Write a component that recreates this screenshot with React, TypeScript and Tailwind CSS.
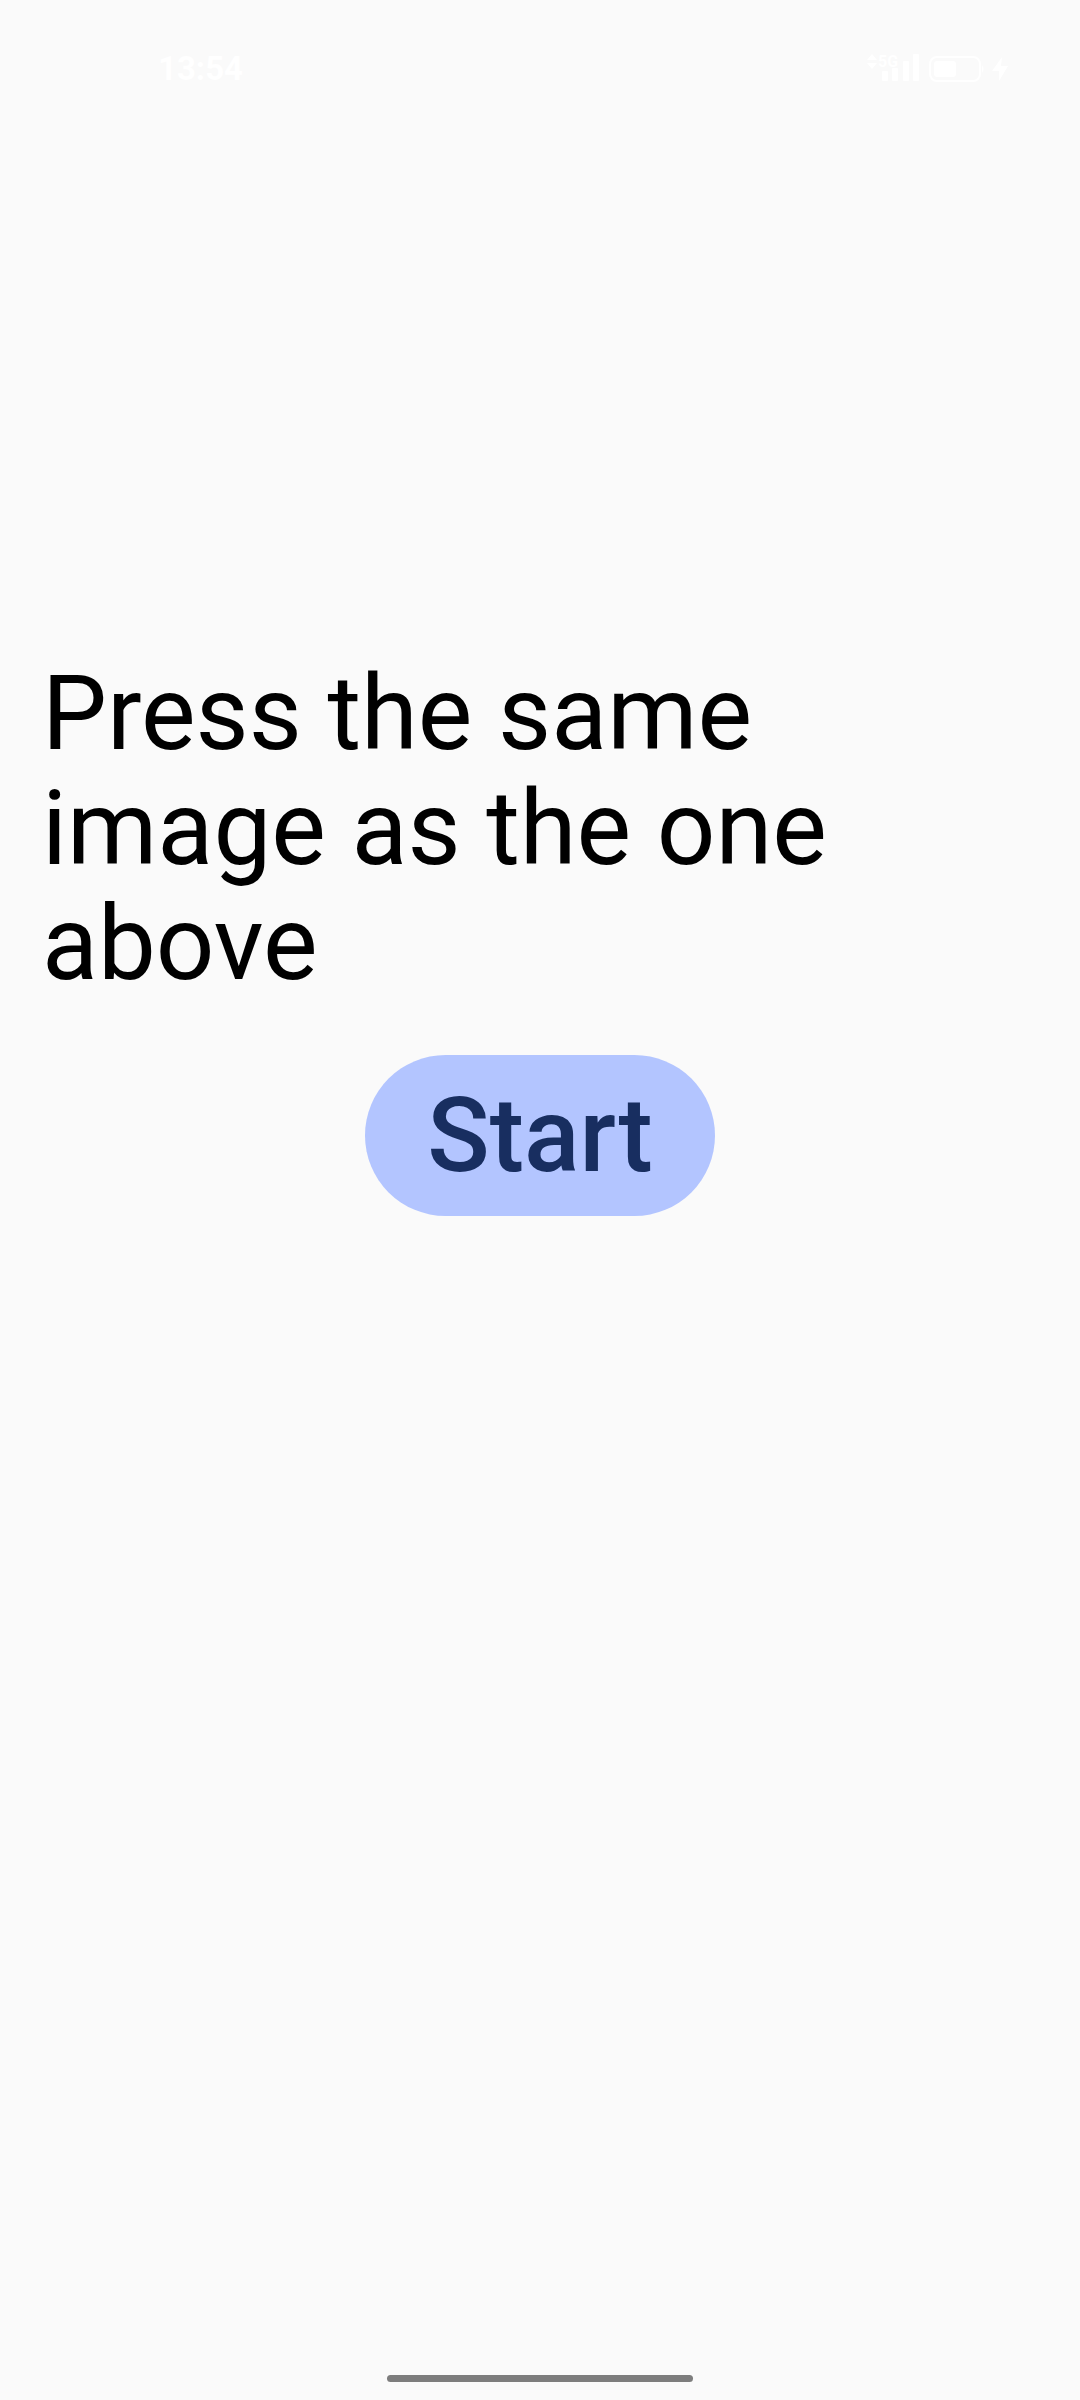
function SignalIcon() {
  return (
    <svg viewBox="0 -6 56 44" className="h-11 w-14" fill="currentColor" aria-hidden="true">
      <path d="M3 7l5-6 5 6zM3 10h10l-5 6z" />
      <text x="14" y="14" fontSize="16" fontWeight="700">
        5G
      </text>
      <rect x="18" y="18" width="6" height="10" rx="1" />
      <rect x="28" y="15" width="6" height="13" rx="1" />
      <rect x="39" y="8" width="6" height="20" rx="1" />
      <rect x="49" y="1" width="6" height="27" rx="1" />
    </svg>
  );
}

function BatteryIcon() {
  return (
    <svg viewBox="0 0 56 28" className="h-7 w-14" aria-hidden="true">
      <rect x="2" y="2" width="50" height="24" rx="7" fill="none" stroke="currentColor" strokeWidth="2" />
      <rect x="6" y="6" width="22" height="16" rx="3" fill="currentColor" />
      <path d="M54 10q3 4 0 8z" fill="currentColor" />
    </svg>
  );
}

function BoltIcon() {
  return (
    <svg viewBox="0 0 16 24" className="h-6 w-4" fill="currentColor" aria-hidden="true">
      <path d="M10 0L0 14h7v10l9-15H9z" />
    </svg>
  );
}

export default function App() {
  return (
    <div className="flex min-h-screen flex-col bg-[#fafafa] font-['Roboto',sans-serif]">
      <header className="flex h-[138px] items-center justify-between pr-[72px] pl-[158px] text-white">
        <time className="text-[33px] leading-[42px] font-bold">13:54</time>
        <div className="flex items-center gap-2">
          <SignalIcon />
          <BatteryIcon />
          <BoltIcon />
        </div>
      </header>
      <main className="flex flex-1 flex-col items-center px-[42px] pt-[518px]">
        <p className="w-full text-[103px] leading-[115px] text-black">
          Press the same
          <br />
          image as the one
          <br />
          above
        </p>
        <button
          type="button"
          className="mt-[54px] rounded-full bg-[#b3c5ff] px-[62px] py-[23px] text-[103px] leading-[115px] font-medium text-[#182e60]"
        >
          Start
        </button>
      </main>
      <footer className="flex justify-center pb-[18px]">
        <div className="h-[7px] w-[306px] rounded-full bg-[#7d7d7d]" />
      </footer>
    </div>
  );
}
